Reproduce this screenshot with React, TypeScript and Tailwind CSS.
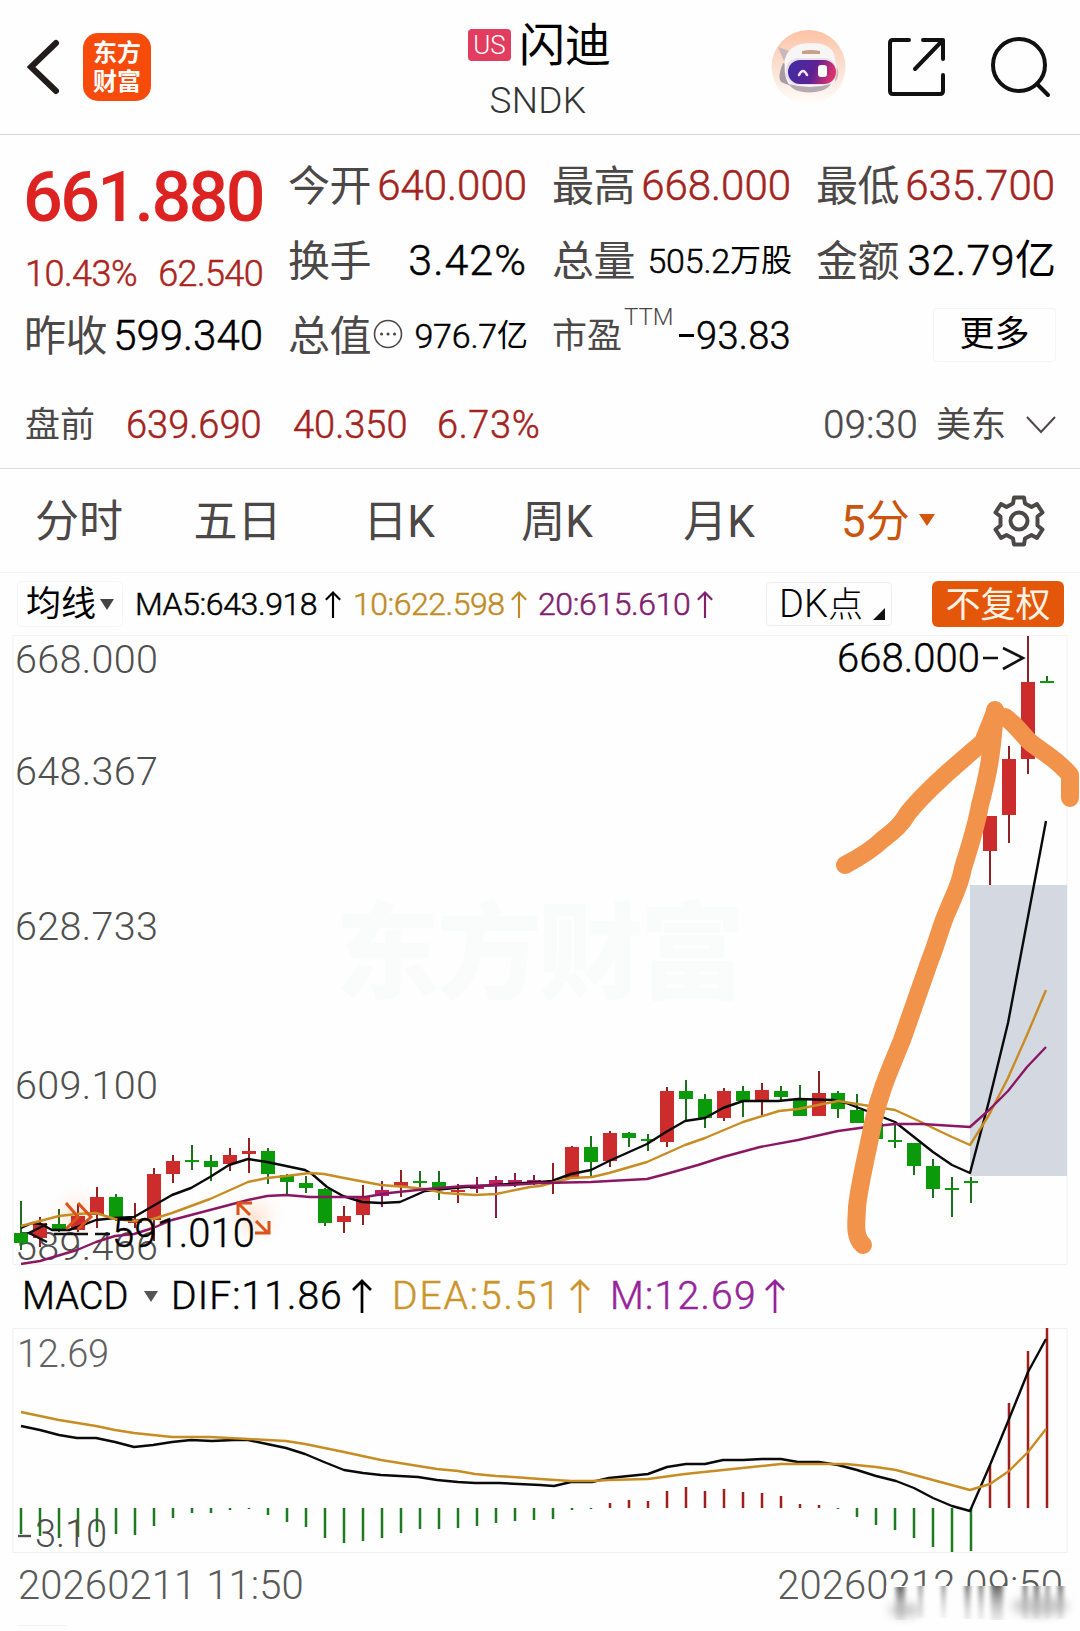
import React from "react";

type Candle = [string, number, number, number, number];

// color, body top, body bottom, high, low
const candles: Candle[] = [
  ["g", 1233, 1243, 1201, 1250],
  ["r", 1223, 1238, 1217, 1247],
  ["g", 1224, 1229, 1209, 1232],
  ["r", 1216, 1230, 1204, 1232],
  ["r", 1197, 1215, 1187, 1228],
  ["g", 1197, 1217, 1194, 1221],
  ["r", 1219, 1223, 1203, 1228],
  ["r", 1174, 1220, 1168, 1241],
  ["r", 1161, 1174, 1155, 1183],
  ["g", 1160, 1162, 1145, 1170],
  ["g", 1161, 1167, 1155, 1181],
  ["r", 1155, 1164, 1148, 1171],
  ["r", 1151, 1154, 1138, 1173],
  ["g", 1151, 1174, 1148, 1184],
  ["g", 1175, 1182, 1174, 1195],
  ["g", 1183, 1188, 1176, 1193],
  ["g", 1189, 1223, 1188, 1226],
  ["r", 1216, 1222, 1206, 1233],
  ["r", 1197, 1215, 1185, 1225],
  ["m", 1190, 1196, 1181, 1207],
  ["r", 1182, 1187, 1170, 1197],
  ["g", 1181, 1183, 1171, 1187],
  ["g", 1182, 1189, 1171, 1200],
  ["r", 1190, 1192, 1184, 1203],
  ["m", 1185, 1189, 1177, 1193],
  ["m", 1180, 1185, 1176, 1218],
  ["m", 1180, 1183, 1173, 1187],
  ["m", 1180, 1182, 1175, 1185],
  ["r", 1182, 1184, 1163, 1194],
  ["r", 1147, 1178, 1146, 1178],
  ["g", 1147, 1162, 1136, 1176],
  ["r", 1133, 1161, 1131, 1167],
  ["g", 1133, 1138, 1132, 1147],
  ["g", 1139, 1141, 1134, 1151],
  ["r", 1091, 1142, 1087, 1147],
  ["g", 1091, 1099, 1080, 1120],
  ["g", 1099, 1118, 1094, 1128],
  ["r", 1091, 1118, 1088, 1121],
  ["g", 1091, 1101, 1086, 1117],
  ["r", 1090, 1101, 1083, 1116],
  ["g", 1091, 1097, 1086, 1102],
  ["g", 1099, 1116, 1085, 1116],
  ["r", 1093, 1116, 1071, 1116],
  ["g", 1093, 1109, 1091, 1118],
  ["g", 1110, 1123, 1094, 1123],
  ["g", 1123, 1139, 1123, 1139],
  ["g", 1140, 1142, 1123, 1148],
  ["g", 1143, 1166, 1143, 1175],
  ["g", 1166, 1189, 1159, 1198],
  ["g", 1188, 1190, 1177, 1217],
  ["g", 1181, 1183, 1177, 1203],
  ["r", 816, 851, 816, 885],
  ["r", 759, 815, 746, 843],
  ["r", 682, 759, 636, 774],
  ["g", 681, 683, 676, 683],
];

const body: Record<string, string> = {
  g: "#0a9a0a",
  r: "#cd2c2c",
  m: "#c4205f",
};
const wick: Record<string, string> = {
  g: "#1d6e1d",
  r: "#8e2222",
  m: "#8a1b4c",
};

const ma5 =
  "21,1228 32,1223 41,1224 52,1230 69,1230 80,1226 96,1220 115,1218 134,1217 153,1206 172,1195 191,1188 210,1177 229,1165 248,1159 267,1162 305,1170 312,1174 327,1187 343,1196 362,1202 381,1203 400,1202 425,1191 444,1189 465,1187 510,1184 540,1182 552,1181 571,1174 591,1170 609,1161 647,1144 666,1132 685,1121 705,1118 723,1108 743,1101 778,1101 798,1099 833,1100 846,1103 867,1111 895,1122 914,1137 933,1152 952,1165 970,1173 989,1101 1008,1023 1027,922 1046,821";
const ma10 =
  "21,1226 40,1221 59,1216 77,1214 96,1213 115,1219 134,1221 153,1219 172,1213 210,1199 248,1182 267,1178 286,1176 310,1173 324,1174 344,1178 381,1185 406,1187 425,1189 444,1193 475,1195 496,1194 530,1187 540,1186 571,1178 592,1177 609,1173 647,1162 685,1145 705,1138 743,1122 779,1111 798,1109 838,1101 857,1104 895,1110 919,1121 933,1128 952,1137 970,1145 989,1115 1008,1078 1027,1035 1046,990";
const ma20 =
  "21,1264 40,1261 77,1250 96,1242 115,1236 134,1234 153,1228 172,1220 210,1210 248,1200 267,1196 286,1195 310,1197 344,1197 365,1197 389,1193 427,1189 465,1186 510,1185 540,1183 591,1182 609,1181 647,1179 666,1174 698,1165 723,1157 760,1147 798,1140 838,1131 867,1127 895,1124 922,1124 970,1127 989,1110 1008,1091 1027,1067 1046,1047";

const dif =
  "21,1426 40,1430 59,1435 77,1438 96,1438 115,1442 134,1447 153,1445 172,1442 191,1440 212,1441 234,1440 248,1440 267,1444 286,1448 305,1454 324,1462 344,1470 363,1473 381,1475 418,1477 437,1480 458,1482 475,1483 499,1483 540,1485 554,1486 571,1482 592,1482 609,1478 648,1474 667,1467 686,1464 705,1464 723,1460 743,1460 762,1459 781,1459 798,1462 819,1462 838,1465 857,1470 876,1476 896,1481 914,1488 933,1498 952,1506 970,1511 990,1465 1009,1419 1028,1372 1046,1339";
const dea =
  "21,1412 40,1416 59,1420 96,1426 115,1430 134,1433 172,1437 210,1437 248,1439 286,1441 305,1444 344,1452 381,1460 437,1469 458,1471 475,1474 496,1476 513,1477 540,1479 571,1481 592,1481 609,1480 648,1479 685,1474 723,1470 781,1464 798,1464 846,1464 876,1467 896,1470 933,1480 970,1490 990,1484 1009,1471 1028,1452 1046,1429";

const zero = 1508;
const bars = [
  1534, 1536, 1538, 1537, 1532, 1534, 1535, 1526, 1518, 1513, 1513, 1510, 1509,
  1515, 1522, 1527, 1538, 1543, 1541, 1538, 1533, 1529, 1529, 1528, 1526, 1523,
  1521, 1520, 1519, 1510, 1509, 1503, 1500, 1501, 1491, 1487, 1491, 1489, 1492,
  1493, 1496, 1504, 1505, 1509, 1517, 1525, 1530, 1538, 1547, 1552, 1551, 1465,
  1403, 1351, 1328,
];

const priceLabels: [string, number][] = [
  ["668.000", 673],
  ["648.367", 785],
  ["628.733", 940],
  ["609.100", 1099],
  ["589.466", 1260],
];

const tabs = [
  { label: "分时", className: "w-[158px]" },
  { label: "五日", className: "w-[159px]" },
  { label: "日K", className: "w-[164px]" },
  { label: "周K", className: "w-[152px]" },
  { label: "月K", className: "w-[172px]" },
];

// light digits, thickened a little
const thin = "font-light [-webkit-text-stroke:0.5px_currentColor]";

const x = (i: number) => 21 + i * 19;

const UpArrow = ({ className }: { className: string }) => (
  <svg
    viewBox="0 0 20 34"
    className={className}
    fill="none"
    stroke="currentColor"
    strokeWidth="2.700"
  >
    <path d="M10 34V2M1 11L10 2L19 11" />
  </svg>
);

const Stat = ({
  label,
  children,
}: {
  label: string;
  children: React.ReactNode;
}) => (
  <div className="flex items-center justify-between whitespace-nowrap">
    <span className="-ml-0.5 pt-0.5 text-[42px] tracking-[-0.5px] text-[#4c4848]">
      {label}
    </span>
    {children}
  </div>
);

const Header = () => (
  <header className="flex h-[135px] items-center border-b border-[#d4d4d4]">
    <div className="flex w-[400px] items-center pl-[26px]">
      <svg viewBox="0 0 34 56" className="h-14 w-[34px]" fill="none">
        <path
          d="M30 4L5 28L30 52"
          stroke="#231c1c"
          strokeWidth="6"
          strokeLinecap="round"
        />
      </svg>
      <div className="ml-[23px] flex h-[68px] w-[68px] flex-col items-center justify-center gap-[5px] rounded-[15px] bg-[#f64b0b] text-[24px] font-bold text-white">
        <span>东方</span>
        <span>财富</span>
      </div>
    </div>
    <div className="flex w-[280px] flex-col items-center gap-[14px] pt-[7px]">
      <div className="flex items-center gap-2 pr-px">
        <span className="flex h-8 w-[43px] items-center justify-center rounded bg-[#e23c5f] text-[26px] font-light text-white">
          US
        </span>
        <span className="text-[46px] text-black">闪迪</span>
      </div>
      <span className="-ml-1 text-[37px] font-light tracking-[0.3px] text-[#333]">
        SNDK
      </span>
    </div>
    <div className="flex flex-1 items-center pl-[91px]">
      <svg viewBox="0 0 76 76" className="h-[76px] w-[76px]">
        <defs>
          <linearGradient id="halo" x1="0" y1="0" x2="0" y2="1">
            <stop offset="0" stopColor="#fdc3a4" />
            <stop offset="0.55" stopColor="#fbe3d6" />
            <stop offset="1" stopColor="#fffdfa" />
          </linearGradient>
          <linearGradient id="visor" x1="0" y1="0" x2="1" y2="0.2">
            <stop offset="0" stopColor="#3d2fa6" />
            <stop offset="0.6" stopColor="#5d2193" />
            <stop offset="1" stopColor="#d5336f" />
          </linearGradient>
        </defs>
        <circle cx="37.500" cy="38" r="37" fill="url(#halo)" />
        <path d="M7 18L18 22L13 32Z" fill="#c9b7bd" />
        <path d="M12 34Q6 48 10 53L20 57L17 36Z" fill="#a99ba6" />
        <path d="M64 36Q71 44 64 53Z" fill="#cdb6bd" />
        <path
          d="M14 30Q18 14 40 14Q63 14 64 30Q69 50 58 58Q38 66 20 58Q12 50 14 30Z"
          fill="#f8f5f6"
        />
        <path
          d="M18 55Q38 61 60 55Q55 63 38 63.500Q22 63 18 55Z"
          fill="#b3aab2"
        />
        <path d="M31 22Q40 20 49 22V25H31Z" fill="#c99f86" />
        <rect x="15" y="29" width="50" height="27" rx="12" fill="#e9dfe9" />
        <rect x="17" y="31" width="48" height="24" rx="12" fill="url(#visor)" />
        <path
          d="M28 46Q32 38 36 46"
          stroke="#f1e6ff"
          strokeWidth="2.6"
          fill="none"
          strokeLinecap="round"
        />
        <rect x="47" y="36" width="9" height="12" rx="3" fill="#fff" />
      </svg>
      <svg
        viewBox="0 0 60 60"
        className="ml-10 h-[60px] w-[60px]"
        fill="none"
        stroke="#111"
        strokeWidth="4"
        strokeLinecap="round"
        strokeLinejoin="round"
      >
        <path d="M22 3H6Q3 3 3 6V54Q3 57 6 57H53Q56 57 56 54V38" />
        <path d="M36 3H56V22" />
        <path d="M55 4L28 32" />
      </svg>
      <svg
        viewBox="0 0 64 64"
        className="ml-[43px] h-16 w-16"
        fill="none"
        stroke="#111"
        strokeWidth="4"
        strokeLinecap="round"
      >
        <circle cx="29" cy="30" r="26" />
        <path d="M47 49L58 60" />
      </svg>
    </div>
  </header>
);

const Quote = () => (
  <section className="h-[334px] border-b border-[#dcdcdc] px-[26px] pt-[13px]">
    <div className="grid grid-cols-4 grid-rows-[75px_75px_75px] gap-x-7">
      <div className="row-span-2 flex flex-col gap-6 pt-[14px]">
        <span className="-ml-[3px] text-[70px] font-medium tracking-[-2.6px] text-[#dc2322]">
          661.880
        </span>
        <div className="flex justify-between text-[36px] text-[#ab2421]">
          <span className={`-ml-px tracking-[-0.5px] ${thin}`}>10.43%</span>
          <span className={`-mr-px tracking-[-0.6px] ${thin}`}>62.540</span>
        </div>
      </div>
      <Stat label="今开">
        <span className={`-mr-px text-[42px] text-[#a32320] ${thin}`}>
          640.000
        </span>
      </Stat>
      <Stat label="最高">
        <span className={`-mr-px text-[42px] text-[#a32320] ${thin}`}>
          668.000
        </span>
      </Stat>
      <Stat label="最低">
        <span className={`-mr-px text-[42px] text-[#a32320] ${thin}`}>
          635.700
        </span>
      </Stat>
      <Stat label="换手">
        <span className={`-mr-px text-[43px] tracking-[1px] text-black ${thin}`}>
          3.42%
        </span>
      </Stat>
      <Stat label="总量">
        <span className="-mr-0.5 flex items-center text-black">
          <span className={`text-[34px] tracking-[-0.2px] ${thin}`}>505.2</span>
          <span className="text-[31px]">万股</span>
        </span>
      </Stat>
      <Stat label="金额">
        <span className="-mr-0.5 flex items-center text-black">
          <span className={`text-[43px] tracking-[0.4px] ${thin}`}>32.79</span>
          <span className="text-[41px]">亿</span>
        </span>
      </Stat>
      <Stat label="昨收">
        <span className={`-mr-px text-[42px] text-black ${thin}`}>599.340</span>
      </Stat>
      <div className="flex items-center">
        <span className="-ml-0.5 pt-0.5 text-[42px] tracking-[-0.5px] text-[#4c4848]">
          总值
        </span>
        <svg
          viewBox="0 0 30 30"
          className="mb-1 ml-0.5 h-[30px] w-[30px] shrink-0"
          fill="none"
          stroke="#4c4848"
        >
          <circle cx="15" cy="15" r="13.5" strokeWidth="1.6" />
          <path
            d="M8.5 15H8.6M15 15H15.1M21.5 15H21.6"
            strokeWidth="3"
            strokeLinecap="round"
          />
        </svg>
        <span className="-mr-0.5 ml-auto flex items-center text-black">
          <span className={`text-[34px] tracking-[-0.2px] ${thin}`}>976.7</span>
          <span className="text-[31px]">亿</span>
        </span>
      </div>
      <div className="flex items-center whitespace-nowrap">
        <span className="-ml-0.5 pt-0.5 text-[35px] text-[#4c4848]">市盈</span>
        <span className="mb-[37px] ml-0.5 text-[24px] font-light text-[#4c4848]">
          TTM
        </span>
        <span
          className={`-mr-px ml-auto flex items-center gap-0.5 text-[38px] tracking-[0.3px] text-black ${thin}`}
        >
          <span className="h-[3px] w-[15px] bg-black" />
          93.83
        </span>
      </div>
      <div className="flex items-center justify-end">
        <span className="-mr-0.5 mb-0.5 flex h-[54px] w-[123px] items-center justify-center rounded border border-[#f4f4f4] text-[35px] text-black">
          更多
        </span>
      </div>
    </div>
    <div className="flex h-[105px] items-center pb-0.5 text-[38px] text-[#a32320]">
      <span className="-ml-px w-[101px] pt-0.5 text-[35px] text-[#4c4848]">
        盘前
      </span>
      <span className={`w-[167px] ${thin}`}>639.690</span>
      <span className={`w-[144px] ${thin}`}>40.350</span>
      <span className={`tracking-[0.6px] ${thin}`}>6.73%</span>
      <span className={`ml-auto tracking-[0.5px] text-[#4c4848] ${thin}`}>
        09:30
      </span>
      <span className="ml-[18px] pt-0.5 text-[35px] text-[#4c4848]">美东</span>
      <svg
        viewBox="0 0 30 18"
        className="-mr-0.5 ml-5 h-[18px] w-[30px]"
        fill="none"
        stroke="#4c4848"
        strokeWidth="2"
      >
        <path d="M1 1L15 16L29 1" />
      </svg>
    </div>
  </section>
);

const Tabs = () => (
  <nav className="flex h-[104px] items-center border-b border-[#f3f3f3] text-[44px] text-[#4c4848]">
    {tabs.map((tab) => (
      <span key={tab.label} className={`pt-[3px] text-center ${tab.className}`}>
        {tab.label}
      </span>
    ))}
    <span className="flex w-[188px] items-center gap-[9px] pt-[3px] pl-9 text-[#c8560f]">
      5分
      <svg viewBox="0 0 16 12" className="-mt-1 h-3 w-4" fill="#d4560c">
        <path d="M0 0H16L8 12Z" />
      </svg>
    </span>
    <svg
      viewBox="0 0 52 52"
      className="h-[52px] w-[52px]"
      fill="none"
      stroke="#4c4848"
      strokeWidth="4"
      strokeLinejoin="round"
    >
      <path d="M21 2.500H31L32 8.500L38.500 12L44 9L49.500 17.500L44.500 21.500V30.500L49.500 34.500L44 43L38.500 40L32 43.500L31 49.500H21L20 43.500L13.500 40L8 43L2.500 34.500L7.500 30.500V21.500L2.500 17.500L8 9L13.500 12L20 8.500Z" />
      <circle cx="26" cy="26" r="8.500" />
    </svg>
  </nav>
);

const PriceChart = () => (
  <section>
    <div className="flex h-[62px] items-center pl-[17px] text-[32px]">
      <div className="flex h-[46px] w-[106px] items-center gap-1 rounded border border-[#f4f6f6] pl-2 text-[35px] text-black">
        均线
        <svg viewBox="0 0 14 11" className="h-[11px] w-[14px]" fill="#444">
          <path d="M0 0H14L7 11Z" />
        </svg>
      </div>
      <span className={`ml-3 w-[190px] tracking-[-0.4px] text-black ${thin}`}>
        MA5:643.918
      </span>
      <UpArrow className="h-[27px] w-4 text-black" />
      <span
        className={`ml-3 w-[158px] tracking-[-0.5px] text-[#c08c25] ${thin}`}
      >
        10:622.598
      </span>
      <UpArrow className="h-[27px] w-4 text-[#c08c25]" />
      <span
        className={`ml-[11px] w-[159px] tracking-[-0.4px] text-[#80206e] ${thin}`}
      >
        20:615.610
      </span>
      <UpArrow className="h-[27px] w-4 text-[#80206e]" />
      <div className="ml-[53px] flex h-11 w-[126px] items-center rounded border border-[#eee] pl-3 text-[38px] text-black">
        <span className="w-[94px] font-light whitespace-nowrap">
          DK<span className="text-[35px]">点</span>
        </span>
        <svg viewBox="0 0 12 12" className="mt-5 h-3 w-3" fill="#111">
          <path d="M12 0V12H0Z" />
        </svg>
      </div>
      <div className="ml-10 flex h-[46px] w-[132px] items-center justify-center rounded-md bg-[#e4570a] pt-0.5 text-[35px] text-[#fff3e6]">
        不复权
      </div>
    </div>
    <svg
      viewBox="0 635 1080 630"
      className="block h-[630px] w-[1080px]"
      fontFamily="Roboto"
    >
      <defs>
        <radialGradient id="glow">
          <stop offset="0" stopColor="#ffd9c2" stopOpacity="0.8" />
          <stop offset="1" stopColor="#fff" stopOpacity="0" />
        </radialGradient>
      </defs>
      <path
        d="M13 1264V635.500H1067V1264M13 1264.500H1067"
        stroke="#f1f1f1"
        fill="none"
      />
      <text
        x="335"
        y="990"
        fontSize="105"
        fontWeight="900"
        fontFamily="Noto Sans CJK SC"
        fill="#fafbfb"
        textLength="410"
      >
        东方财富
      </text>
      <rect x="970" y="885" width="97" height="291" fill="#d4d8e0" />
      <circle cx="77" cy="1215" r="34" fill="url(#glow)" />
      <circle cx="254" cy="1218" r="34" fill="url(#glow)" />
      {priceLabels.map(([label, y]) => (
        <text
          key={label}
          x="15"
          y={y}
          fontSize="39.500"
          fontWeight="300"
          fill="#4f4f4f"
          textLength="143"
        >
          {label}
        </text>
      ))}
      {candles.map(([c, top, bottom, high, low], i) => (
        <g key={i}>
          <rect
            x={x(i) - 1}
            y={high}
            width="2"
            height={low - high}
            fill={wick[c]}
          />
          <rect
            x={x(i) - 7}
            y={top}
            width="14"
            height={bottom - top}
            fill={body[c]}
          />
        </g>
      ))}
      <g fill="none" strokeWidth="2.4" strokeLinejoin="round">
        <polyline points={ma5} stroke="#0a0a0a" />
        <polyline points={ma10} stroke="#c78d23" />
        <polyline points={ma20} stroke="#8b1763" />
      </g>
      <g fill="none" stroke="#d9531a" strokeWidth="3">
        <path d="M66 1203L78 1217L66 1229M78 1203L91 1217L78 1229" />
        <path d="M250 1215L238 1203M238 1215V1203H252" />
        <path d="M256 1221L268 1233M269 1221V1233H255" />
      </g>
      <path
        d="M47 1224L29 1233L47 1242M54 1234H88M95 1234H110"
        fill="none"
        stroke="#111"
        strokeWidth="2.400"
      />
      <g
        fontSize="40"
        fontWeight="300"
        stroke="#000"
        strokeWidth="0.4"
      >
        <text x="112" y="1247" textLength="143">
          591.010
        </text>
        <text x="837" y="672" textLength="143">
          668.000
        </text>
      </g>
      <path
        d="M983 658H998M1003 648L1023 658L1003 669"
        fill="none"
        stroke="#111"
        strokeWidth="2.600"
      />
      <g
        fill="none"
        stroke="#f2934c"
        strokeWidth="18"
        strokeLinecap="round"
        strokeLinejoin="round"
      >
        <path d="M863 1245C853 1236 857 1220 857 1207C860 1180 868 1150 873 1123C880 1090 892 1065 902 1040L930 960C938 940 941 925 948 910C955 893 960 885 963 868C970 845 976 828 980 805C988 775 992 755 995 710" />
        <path d="M845 865C860 857 872 850 882 840C892 832 900 827 908 813C925 792 950 770 983 742L995 712" />
        <path d="M1005 717C1014 723 1022 734 1030 742C1042 752 1056 758 1070 775V798" />
      </g>
    </svg>
  </section>
);

const MacdChart = () => (
  <section>
    <div className="flex h-[62px] items-center pl-[22px] text-[39px]">
      <span className={`w-[122px] text-[38px] text-black ${thin}`}>MACD</span>
      <svg viewBox="0 0 14 11" className="h-[11px] w-[14px]" fill="#555">
        <path d="M0 0H14L7 11Z" />
      </svg>
      <span
        className={`ml-[13px] w-[181px] tracking-[1.1px] text-black ${thin}`}
      >
        DIF:11.86
      </span>
      <UpArrow className="h-[34px] w-5 text-black" />
      <span
        className={`ml-5 w-[178px] tracking-[1.9px] text-[#cb952c] ${thin}`}
      >
        DEA:5.51
      </span>
      <UpArrow className="h-[34px] w-5 text-[#cb952c]" />
      <span
        className={`ml-5 w-[155px] tracking-[1.3px] text-[#97239a] ${thin}`}
      >
        M:12.69
      </span>
      <UpArrow className="h-[34px] w-5 text-[#97239a]" />
    </div>
    <svg
      viewBox="0 1327 1080 226"
      className="block h-[226px] w-[1080px]"
      fontFamily="Roboto"
      fontWeight="300"
    >
      <path
        d="M13 1328.500H1067V1552.500H13Z"
        stroke="#efefef"
        fill="none"
      />
      <text x="17" y="1367" fontSize="38" fill="#626262" textLength="92">
        12.69
      </text>
      {bars.map((y, i) => (
        <rect
          key={i}
          x={x(i) - 1.25}
          y={Math.min(y, zero)}
          width="2.500"
          height={Math.abs(y - zero)}
          fill={y > zero ? "#1f7a24" : "#a11f1a"}
        />
      ))}
      <text x="35" y="1547" fontSize="38" fill="#4f4f4f" textLength="72">
        3.10
      </text>
      <path d="M18 1536H31" stroke="#4f4f4f" strokeWidth="2.400" />
      <g fill="none" strokeWidth="2.400" strokeLinejoin="round">
        <polyline points={dif} stroke="#0a0a0a" />
        <polyline points={dea} stroke="#c78d23" />
      </g>
    </svg>
    <div className="relative flex h-[78px] items-start justify-between pt-[13px] pr-[17px] pl-[18px] text-[40px] font-light text-[#5a5a5a]">
      <span className="tracking-[0.1px]">20260211 11:50</span>
      <span className="tracking-[0.1px]">20260212 09:50</span>
      <svg
        viewBox="880 1580 200 51"
        className="absolute right-0 bottom-0 h-[51px] w-[200px]"
      >
        <defs>
          <linearGradient id="streak" x1="0" y1="0" x2="0" y2="1">
            <stop offset="0" stopColor="#666" />
            <stop offset="0.5" stopColor="#aaa" stopOpacity="0.8" />
            <stop offset="1" stopColor="#bbb" stopOpacity="0.3" />
          </linearGradient>
          <filter id="soft" x="-10%" width="120%">
            <feGaussianBlur stdDeviation="2 0.4" />
          </filter>
          <filter id="haze" x="-20%" y="-60%" width="140%" height="220%">
            <feGaussianBlur stdDeviation="5" />
          </filter>
        </defs>
        <rect x="886" y="1586" width="184" height="36" fill="#fefefe" />
        <ellipse
          cx="905"
          cy="1610"
          rx="16"
          ry="7"
          fill="#999"
          opacity="0.5"
          filter="url(#haze)"
        />
        <ellipse
          cx="1040"
          cy="1606"
          rx="28"
          ry="10"
          fill="#999"
          opacity="0.5"
          filter="url(#haze)"
        />
        <g filter="url(#soft)" fill="url(#streak)">
          <rect x="896" y="1587" width="9" height="33" />
          <rect x="919" y="1586" width="3" height="32" />
          <rect x="942" y="1586" width="3" height="32" />
          <rect x="965" y="1586" width="5" height="33" />
          <rect x="979" y="1586" width="4" height="33" />
          <rect x="991" y="1586" width="12" height="34" />
          <rect x="1023" y="1586" width="4" height="33" />
          <rect x="1034" y="1586" width="5" height="33" />
          <rect x="1046" y="1586" width="3" height="33" />
          <rect x="1058" y="1586" width="5" height="33" />
        </g>
      </svg>
    </div>
    <div className="mt-[-6px] ml-[17px] h-2 w-[50px] border-t border-[#f1f3f3]" />
  </section>
);

const App = () => {
  return (
    <main className="h-[1631px] w-[1080px] overflow-hidden bg-[#fefefe] font-[Roboto,'Noto_Sans_CJK_SC',sans-serif] leading-none">
      <Header />
      <Quote />
      <Tabs />
      <PriceChart />
      <MacdChart />
    </main>
  );
};

export default App;
